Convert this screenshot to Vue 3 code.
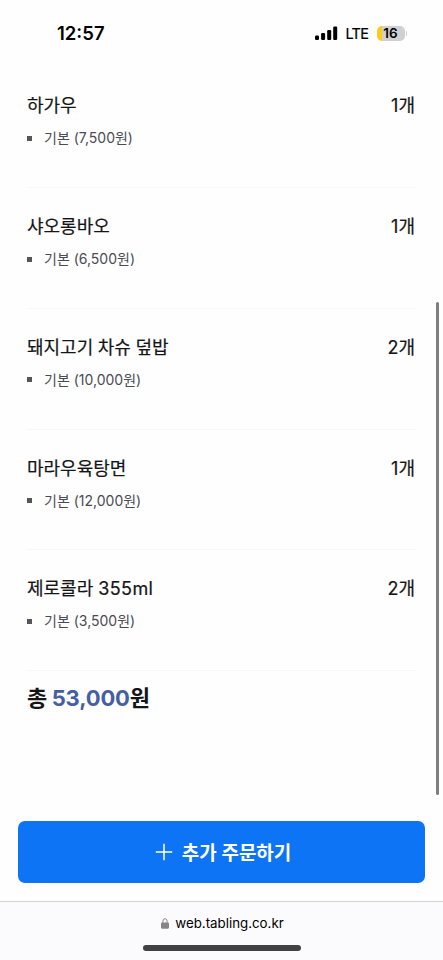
<script setup>
const items = [
  { name: '하가우', count: 1, price: '7,500' },
  { name: '샤오롱바오', count: 1, price: '6,500' },
  { name: '돼지고기 차슈 덮밥', count: 2, price: '10,000' },
  { name: '마라우육탕면', count: 1, price: '12,000' },
  { name: '제로콜라', size: '355ml', count: 2, price: '3,500' },
]
</script>

<template>
  <div class="screen">
    <header class="status">
      <span class="clock">12:57</span>
      <div class="indicators">
        <svg class="signal" width="23" height="15" viewBox="0 0 23 15">
          <rect x="0" y="9.4" width="4" height="4.6" rx="1.2" />
          <rect x="6.1" y="7" width="4" height="7" rx="1.2" />
          <rect x="12.2" y="4" width="4" height="10" rx="1.2" />
          <rect x="18.2" y="0.6" width="4" height="13.4" rx="1.2" />
        </svg>
        <span class="network">LTE</span>
        <span class="battery">16</span>
        <span class="cap"></span>
      </div>
    </header>

    <main class="order">
      <ul class="list">
        <li v-for="item in items" :key="item.name" class="item">
          <div class="title">
            <span>{{ item.name }}<span v-if="item.size" class="size">&nbsp;{{ item.size }}</span></span>
            <span class="count">{{ item.count }}개</span>
          </div>
          <div class="option">
            <i class="bullet"></i>
            <span class="option-text">기본 ({{ item.price }}원)</span>
          </div>
        </li>
      </ul>
      <p class="total">총 <span class="amount">53,000</span>원</p>
    </main>

    <button class="add" type="button">
      <svg width="18" height="18" viewBox="0 0 18 18" fill="none" stroke="#fff" stroke-width="1.5">
        <path d="M9 .8v16.4M.8 9h16.4" />
      </svg>
      <span class="add-label">추가 주문하기</span>
    </button>

    <footer class="browser">
      <div class="address">
        <svg width="8" height="11" viewBox="0 0 8 11">
          <path d="M1.9 5V3.1a2.1 2.4 0 0 1 4.2 0V5" fill="none" stroke="#858587" stroke-width="1" />
          <rect x="0" y="4.5" width="8" height="6.2" rx="1.1" fill="#858587" />
        </svg>
        <span>web.tabling.co.kr</span>
      </div>
      <div class="home"></div>
    </footer>
    <div class="scrollbar"></div>
  </div>
</template>

<style>
body {
  background: #fff;
}
</style>

<style scoped>
.screen {
  position: relative;
  box-sizing: border-box;
  width: 443px;
  height: 960px;
  display: flex;
  flex-direction: column;
  overflow: hidden;
  background: #fefefe;
  color: #151517;
  font-family: Inter, 'Noto Sans CJK KR', sans-serif;
}
.status {
  height: 67px;
  flex: none;
  box-sizing: border-box;
  padding: 0 36px 0 57px;
  display: flex;
  align-items: center;
  justify-content: space-between;
  color: #000;
}
.clock {
  padding-bottom: 1px;
  font-size: 18.5px;
  font-weight: 600;
}
.indicators {
  display: flex;
  align-items: center;
}
.network {
  margin-left: 8px;
  width: 23px;
  font-size: 14.5px;
  letter-spacing: -0.7px;
  white-space: nowrap;
  -webkit-text-stroke: 0.2px currentColor;
}
.battery {
  margin-left: 8px;
  width: 28px;
  height: 15px;
  border-radius: 5px;
  background: linear-gradient(to right, #fccc1c 5px, #d0d0d0 5px);
  font-size: 13.5px;
  line-height: 15px;
  font-weight: 600;
  text-align: center;
}
.cap {
  margin-left: 1px;
  width: 1.5px;
  height: 5px;
  border-radius: 0 2px 2px 0;
  background: #d0d0d0;
}
.order {
  height: 754px;
  flex: none;
  padding: 0 27px;
}
.list {
  margin: 0;
  padding: 0;
  list-style: none;
}
.item {
  box-sizing: border-box;
  height: 120.8px;
  padding-top: 26px;
  border-bottom: 1px solid #f7f7f8;
}
.item:first-child {
  height: 121px;
}
.title {
  display: flex;
  justify-content: space-between;
  height: 26px;
  line-height: 26px;
  font-size: 18px;
  font-weight: 400;
  word-spacing: -0.5px;
  -webkit-text-stroke: 0.2px currentColor;
}
.size {
  letter-spacing: 0.4px;
}
.count {
  margin-right: 1px;
}
.option {
  display: flex;
  align-items: center;
  gap: 12px;
  height: 20px;
  margin-top: 9px;
  font-size: 14px;
  color: #4b4b55;
}
.option-text {
  padding-bottom: 2px;
}
.bullet {
  width: 5px;
  height: 5px;
  background: #55555d;
}
.total {
  margin: 10px 0 0;
  line-height: 34px;
  font-size: 22px;
  font-weight: 700;
  word-spacing: -0.8px;
}
.amount {
  color: #455fa6;
  letter-spacing: -0.15px;
}
.add {
  flex: none;
  height: 62px;
  margin: 0 18px;
  padding: 0 0 0 3px;
  border: 0;
  border-radius: 7px;
  background: #0d74f6;
  color: #fff;
  display: flex;
  align-items: center;
  justify-content: center;
  gap: 9px;
  font: 600 19px Inter, 'Noto Sans CJK KR', sans-serif;
}
.add-label {
  padding-bottom: 2px;
}
.browser {
  flex: 1;
  margin-top: 18px;
  border-top: 1px solid #d2d2d6;
  background: #fbfbfd;
  display: flex;
  flex-direction: column;
  align-items: center;
}
.address {
  height: 43px;
  padding-left: 2px;
  display: flex;
  align-items: center;
  gap: 6px;
  font-size: 13.3px;
  color: #000;
}
.address span {
  padding-bottom: 1px;
}
.home {
  width: 158px;
  height: 6px;
  border-radius: 3px;
  background: #414143;
}
.scrollbar {
  position: absolute;
  top: 302px;
  right: 4px;
  width: 3px;
  height: 493px;
  border-radius: 2px;
  background: #808080;
}
</style>
